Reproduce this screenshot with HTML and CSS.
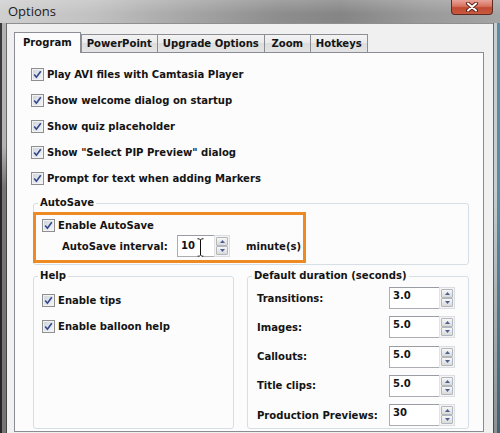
FILE: index.html
```html
<!DOCTYPE html>
<html>
<head>
<meta charset="utf-8">
<link rel="stylesheet" href="styles.css">
</head>
<body>
<div class="window">
  <div class="titlebar">
    <span class="title">Options</span>
    <div class="close">
      <svg width="14" height="10" viewBox="0 0 14 10"><path d="M3 1.5 L11 8.5 M11 1.5 L3 8.5" stroke="#5b2219" stroke-width="4" stroke-linecap="round"/><path d="M3 1.5 L11 8.5 M11 1.5 L3 8.5" stroke="#ffffff" stroke-width="2" stroke-linecap="round"/></svg>
    </div>
  </div>
  <div class="body">
    <div class="frame-left"></div>
    <div class="client">
      <div class="tabs">
        <div class="tab active">Program</div>
        <div class="tab">PowerPoint</div>
        <div class="tab">Upgrade Options</div>
        <div class="tab">Zoom</div>
        <div class="tab">Hotkeys</div>
      </div>
      <div class="panel">
        <div class="opts">
          <div class="check"><span class="box"><svg width="9" height="9" viewBox="0 0 9 9"><path d="M1.2 4.6 L3.4 7.3 L7.8 1.2" fill="none" stroke="#33498a" stroke-width="1.6"/></svg></span>Play AVI files with Camtasia Player</div>
          <div class="check"><span class="box"><svg width="9" height="9" viewBox="0 0 9 9"><path d="M1.2 4.6 L3.4 7.3 L7.8 1.2" fill="none" stroke="#33498a" stroke-width="1.6"/></svg></span>Show welcome dialog on startup</div>
          <div class="check"><span class="box"><svg width="9" height="9" viewBox="0 0 9 9"><path d="M1.2 4.6 L3.4 7.3 L7.8 1.2" fill="none" stroke="#33498a" stroke-width="1.6"/></svg></span>Show quiz placeholder</div>
          <div class="check"><span class="box"><svg width="9" height="9" viewBox="0 0 9 9"><path d="M1.2 4.6 L3.4 7.3 L7.8 1.2" fill="none" stroke="#33498a" stroke-width="1.6"/></svg></span>Show "Select PIP Preview" dialog</div>
          <div class="check"><span class="box"><svg width="9" height="9" viewBox="0 0 9 9"><path d="M1.2 4.6 L3.4 7.3 L7.8 1.2" fill="none" stroke="#33498a" stroke-width="1.6"/></svg></span>Prompt for text when adding Markers</div>
        </div>

        <div class="group autosave">
          <span class="legend">AutoSave</span>
          <div class="check short"><span class="box"><svg width="9" height="9" viewBox="0 0 9 9"><path d="M1.2 4.6 L3.4 7.3 L7.8 1.2" fill="none" stroke="#33498a" stroke-width="1.6"/></svg></span>Enable AutoSave</div>
          <div class="interval">
            <span class="ilabel">AutoSave interval:</span>
            <div class="spin">
              <div class="field small">10
                <svg class="ibeam" width="7" height="19" viewBox="0 0 7 19"><path d="M0.5 0.8 H2.3 L3.5 2 L4.7 0.8 H6.5 M3.5 2 V17 M0.5 18.2 H2.3 L3.5 17 L4.7 18.2 H6.5" fill="none" stroke="#ffffff" stroke-width="2.4"/><path d="M0.5 0.8 H2.3 L3.5 2 L4.7 0.8 H6.5 M3.5 2 V17 M0.5 18.2 H2.3 L3.5 17 L4.7 18.2 H6.5" fill="none" stroke="#111111" stroke-width="1"/></svg>
              </div>
              <div class="arrows">
                <span class="btn"><svg width="5" height="3" viewBox="0 0 5 3"><path d="M0 3 L2.5 0 L5 3Z" fill="#4a5f92"/></svg></span>
                <span class="btn"><svg width="5" height="3" viewBox="0 0 5 3"><path d="M0 0 L2.5 3 L5 0Z" fill="#4a5f92"/></svg></span>
              </div>
            </div>
            <span class="unit">minute(s)</span>
          </div>
          <div class="highlight"></div>
        </div>

        <div class="lower">
          <div class="group help">
            <span class="legend">Help</span>
            <div class="check"><span class="box"><svg width="9" height="9" viewBox="0 0 9 9"><path d="M1.2 4.6 L3.4 7.3 L7.8 1.2" fill="none" stroke="#33498a" stroke-width="1.6"/></svg></span>Enable tips</div>
            <div class="check"><span class="box"><svg width="9" height="9" viewBox="0 0 9 9"><path d="M1.2 4.6 L3.4 7.3 L7.8 1.2" fill="none" stroke="#33498a" stroke-width="1.6"/></svg></span>Enable balloon help</div>
          </div>
          <div class="group duration">
            <span class="legend">Default duration (seconds)</span>
            <div class="drow"><span class="dlabel">Transitions:</span><div class="spin"><div class="field wide">3.0</div><div class="arrows"><span class="btn"><svg width="5" height="3" viewBox="0 0 5 3"><path d="M0 3 L2.5 0 L5 3Z" fill="#4a5f92"/></svg></span><span class="btn"><svg width="5" height="3" viewBox="0 0 5 3"><path d="M0 0 L2.5 3 L5 0Z" fill="#4a5f92"/></svg></span></div></div></div>
            <div class="drow"><span class="dlabel">Images:</span><div class="spin"><div class="field wide">5.0</div><div class="arrows"><span class="btn"><svg width="5" height="3" viewBox="0 0 5 3"><path d="M0 3 L2.5 0 L5 3Z" fill="#4a5f92"/></svg></span><span class="btn"><svg width="5" height="3" viewBox="0 0 5 3"><path d="M0 0 L2.5 3 L5 0Z" fill="#4a5f92"/></svg></span></div></div></div>
            <div class="drow"><span class="dlabel">Callouts:</span><div class="spin"><div class="field wide">5.0</div><div class="arrows"><span class="btn"><svg width="5" height="3" viewBox="0 0 5 3"><path d="M0 3 L2.5 0 L5 3Z" fill="#4a5f92"/></svg></span><span class="btn"><svg width="5" height="3" viewBox="0 0 5 3"><path d="M0 0 L2.5 3 L5 0Z" fill="#4a5f92"/></svg></span></div></div></div>
            <div class="drow"><span class="dlabel">Title clips:</span><div class="spin"><div class="field wide">5.0</div><div class="arrows"><span class="btn"><svg width="5" height="3" viewBox="0 0 5 3"><path d="M0 3 L2.5 0 L5 3Z" fill="#4a5f92"/></svg></span><span class="btn"><svg width="5" height="3" viewBox="0 0 5 3"><path d="M0 0 L2.5 3 L5 0Z" fill="#4a5f92"/></svg></span></div></div></div>
            <div class="drow"><span class="dlabel">Production Previews:</span><div class="spin"><div class="field wide">30</div><div class="arrows"><span class="btn"><svg width="5" height="3" viewBox="0 0 5 3"><path d="M0 3 L2.5 0 L5 3Z" fill="#4a5f92"/></svg></span><span class="btn"><svg width="5" height="3" viewBox="0 0 5 3"><path d="M0 0 L2.5 3 L5 0Z" fill="#4a5f92"/></svg></span></div></div></div>
          </div>
        </div>
      </div>
    </div>
    <div class="frame-right"></div>
  </div>
</div>
</body>
</html>
```

FILE: styles.css
```css
* { box-sizing: border-box; }

html, body {
  margin: 0;
  padding: 0;
  width: 500px;
  height: 433px;
  overflow: hidden;
}

body {
  font-family: "DejaVu Sans Condensed", "DejaVu Sans", sans-serif;
  font-stretch: condensed;
  font-weight: bold;
  font-size: 11.2px;
  color: #141414;
}

.window {
  width: 500px;
  height: 433px;
  display: flex;
  flex-direction: column;
  background: #8a8a8a;
}

/* Title bar */
.titlebar {
  height: 23px;
  flex: none;
  display: flex;
  justify-content: space-between;
  align-items: flex-start;
  background:
    linear-gradient(to bottom, rgba(255,255,255,0.18), rgba(255,255,255,0) 60%),
    linear-gradient(to right, #cfcfcf 0%, #c2c2c2 18%, #a9a9a9 35%, #8e8e8e 55%, #858585 68%, #9a9a9a 85%, #a4a4a4 100%);
}

.title {
  font-family: "Open Sans", "Noto Sans", sans-serif;
  font-stretch: normal;
  font-weight: normal;
  font-size: 13px;
  line-height: 16px;
  color: #1c1c1c;
  padding: 3px 0 0 8px;
}

.close {
  width: 42px;
  height: 15px;
  margin-right: 7px;
  border: 1px solid #5e2b23;
  border-top: none;
  border-radius: 0 0 4px 4px;
  background: linear-gradient(to bottom, #e9a398 0%, #d6715f 45%, #c04a33 55%, #c9593f 100%);
  display: flex;
  align-items: center;
  justify-content: center;
}

/* Frame */
.body {
  flex: 1;
  display: flex;
  min-height: 0;
}

.frame-left {
  width: 7px;
  flex: none;
  background:
    linear-gradient(to bottom, rgba(0,0,0,0) 30%, rgba(0,0,0,0.35) 40%, rgba(0,0,0,0.35) 100%),
    linear-gradient(to right, #3a3a3a 0 2px, #b3b3b3 2px 6px, #6a6a6a 6px 7px);
}

.frame-right {
  width: 7px;
  flex: none;
  background:
    linear-gradient(to bottom, rgba(0,0,0,0) 40%, rgba(0,0,0,0.3) 100%),
    linear-gradient(to right, #6a6a6a 0 1px, #c7ced1 1px 4px, #5b8ea5 4px 7px);
}

.client {
  flex: 1;
  background: #f0f0f0;
  border-top: 1px solid #8f8f8f;
  padding: 8px 9px 0 7px;
  display: flex;
  flex-direction: column;
}

/* Tabs */
.tabs {
  display: flex;
  align-items: flex-end;
  height: 20px;
  flex: none;
}

.tab {
  height: 18px;
  line-height: 17px;
  padding: 0 5px;
  min-width: 47px;
  text-align: center;
  border: 1px solid #8c8e94;
  border-bottom: none;
  margin-left: -1px;
  background: linear-gradient(to bottom, #f3f3f3 0%, #ebebeb 45%, #dddddd 50%, #e4e4e4 100%);
  white-space: nowrap;
}

.tab.active {
  height: 21px;
  line-height: 19px;
  margin-left: 0;
  margin-right: 1px;
  margin-bottom: -1px;
  padding: 0 8px;
  background: #fcfcfc;
  position: relative;
  z-index: 1;
}

.panel {
  flex: none;
  border: 1px solid #898c95;
  background: #fcfcfc;
  padding: 0 0 2px 0;
}

/* Checkboxes */
.opts {
  padding: 8px 0 0 16px;
}

.check {
  height: 26px;
  display: flex;
  align-items: center;
  gap: 3px;
  white-space: nowrap;
}

.check.short {
  height: 20px;
}

.box {
  width: 13px;
  height: 13px;
  flex: none;
  border: 1px solid #8e8f8f;
  background: linear-gradient(135deg, #cdd3dc 0%, #e6e9ee 60%, #f6f7f9 100%);
  box-shadow: inset 0 0 0 1px #f2f2f2;
  display: flex;
  align-items: center;
  justify-content: center;
}

/* Group boxes */
.group {
  position: relative;
  border: 1px solid #d5dfe5;
  border-radius: 3px;
}

.legend {
  position: absolute;
  top: -8px;
  left: 4px;
  padding: 0 2px;
  line-height: 14px;
  background: #fcfcfc;
  white-space: nowrap;
}

.autosave {
  margin: 12px 0 0 18px;
  width: 436px;
  height: 62px;
  padding: 11px 0 0 8px;
}

.highlight {
  position: absolute;
  left: -1px;
  top: 8px;
  width: 273px;
  height: 51px;
  border: 3px solid #ee8a22;
  pointer-events: none;
}

.interval {
  display: flex;
  align-items: center;
  height: 22px;
  margin-left: 20px;
}

.ilabel {
  width: 115px;
  flex: none;
}

.unit {
  margin-left: 16px;
}

/* Spin boxes */
.spin {
  display: flex;
  height: 22px;
  flex: none;
}

.field {
  position: relative;
  height: 22px;
  border: 1px solid #abadb3;
  border-top-color: #9a9ca3;
  border-right: none;
  background: #ffffff;
  padding: 1px 3px;
  line-height: 18px;
}

.field.small {
  width: 37px;
}

.field.wide {
  width: 50px;
  line-height: 14px;
}

.ibeam {
  position: absolute;
  left: 19px;
  top: 2px;
}

.arrows {
  width: 16px;
  height: 22px;
  display: flex;
  flex-direction: column;
  border: 1px solid #dcdde0;
  border-left: 1px solid #e3e3e3;
  background: #f4f4f4;
  padding: 1px;
  gap: 0;
}

.btn {
  flex: 1;
  border: 1px solid #b2b6bd;
  border-radius: 1px;
  background: linear-gradient(to bottom, #f7f7f7 0%, #e8e8e8 50%, #dadada 100%);
  display: flex;
  align-items: center;
  justify-content: center;
}

/* Lower groups */
.lower {
  display: grid;
  grid-template-columns: 201px 222px;
  column-gap: 13px;
  margin: 11px 0 0 18px;
  height: 153px;
}

.help {
  padding: 10px 0 0 8px;
}

.duration {
  padding: 10px 0 0 9px;
  display: flex;
  flex-direction: column;
  gap: 7.25px;
}

.drow {
  display: flex;
  align-items: center;
  height: 22px;
}

.dlabel {
  width: 132px;
  flex: none;
  white-space: nowrap;
}
```
